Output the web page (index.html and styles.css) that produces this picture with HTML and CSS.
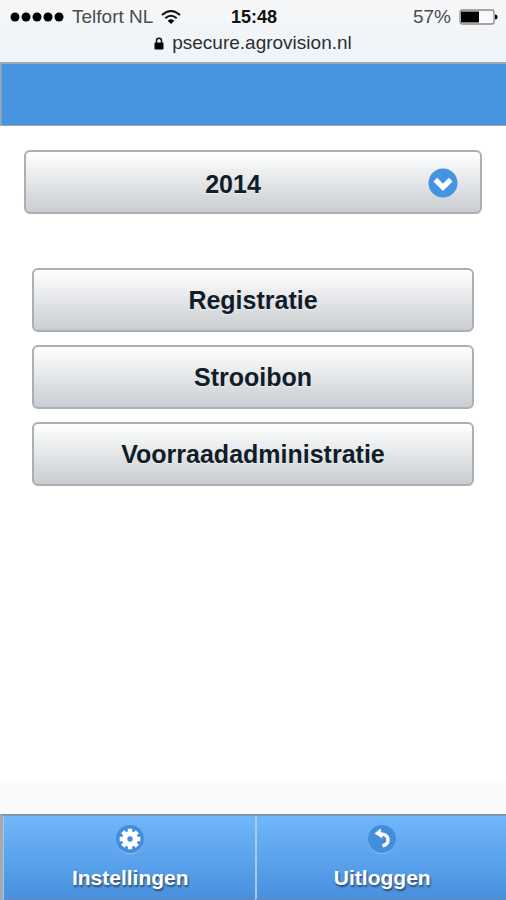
FILE: index.html
```html
<!DOCTYPE html>
<html lang="nl">
<head>
<meta charset="utf-8">
<meta name="viewport" content="width=device-width, initial-scale=1">
<title>Agrovision</title>
<link rel="stylesheet" href="styles.css">
</head>
<body>
<div class="app">
  <div class="browser-bar">
    <div class="status">
      <div class="carrier">
        <svg class="signal" width="54" height="12" viewBox="0 0 54 12" aria-hidden="true"><circle cx="5" cy="6" r="4.5"/><circle cx="16" cy="6" r="4.5"/><circle cx="27" cy="6" r="4.5"/><circle cx="38" cy="6" r="4.5"/><circle cx="49" cy="6" r="4.5"/></svg>
        <span>Telfort NL</span>
        <svg class="wifi" width="20" height="16" viewBox="0 0 20 16" aria-hidden="true"><path d="M1 6Q10-2 19 6M4.300 9.300Q10 4.300 15.700 9.300" fill="none" stroke="#111" stroke-width="2"/><path d="M6.700 11.700Q10 9 13.300 11.700L10 15Z"/></svg>
      </div>
      <span class="clock">15:48</span>
      <div class="power">
        <span>57%</span>
        <svg width="39" height="16" viewBox="0 0 39 16" aria-hidden="true"><rect x="1" y="1" width="34" height="14" rx="2" fill="#fafafa" stroke="#8b8b8b" stroke-width="1.300"/><path d="M2 2.500h18v11H2z"/><path d="M36 5.500q2.500 0 2.500 2.500t-2.500 2.500z"/></svg>
      </div>
    </div>
    <div class="address">
      <svg width="10" height="13" viewBox="0 0 10 13" aria-hidden="true"><path d="M2.500 6V3.700a2.500 2.500 0 0 1 5 0V6" fill="none" stroke="#111" stroke-width="1.500"/><rect x=".5" y="5.500" width="9" height="7" rx="1"/></svg>
      <span>psecure.agrovision.nl</span>
    </div>
  </div>
  <header class="title-bar"></header>
  <main class="content">
    <div class="year">
      <select class="control year-select" aria-label="Jaar"><option>2014</option></select>
      <svg class="year-icon" width="30" height="30" viewBox="0 0 30 30" aria-hidden="true"><circle cx="15" cy="15" r="14.500" fill="#4594e1"/><path d="M7.300 11.700L15 19.300L22.700 11.700" fill="none" stroke="#fff" stroke-width="5.200"/></svg>
    </div>
    <div class="menu">
      <button class="control" type="button">Registratie</button>
      <button class="control" type="button">Strooibon</button>
      <button class="control" type="button">Voorraadadministratie</button>
    </div>
  </main>
  <nav class="tabs">
    <a class="tab" href="#instellingen">
      <svg width="30" height="30" viewBox="0 0 30 30" aria-hidden="true"><circle cx="15" cy="16" r="14" fill="#87bff2"/><circle cx="15" cy="15" r="14" fill="#438edc"/><g stroke="#fff" stroke-width="4.400"><path d="M15 4.700v20.600M4.700 15h20.600M7.700 7.700l14.600 14.600M22.300 7.700L7.700 22.300"/></g><circle cx="15" cy="15" r="7.800" fill="#fff"/><circle cx="15" cy="15" r="2.700" fill="#438edc"/></svg>
      <span>Instellingen</span>
    </a>
    <a class="tab" href="#uitloggen">
      <svg width="30" height="30" viewBox="0 0 30 30" aria-hidden="true"><circle cx="15" cy="16" r="14" fill="#87bff2"/><circle cx="15" cy="15" r="14" fill="#438edc"/><path d="M12 10.500C18 9.500 21 12 21 16C21 19 19 21 15.500 21.800" fill="none" stroke="#fff" stroke-width="3.400"/><path d="M7.500 9.500L13.500 4.500L15.500 14.500Z" fill="#fff"/></svg>
      <span>Uitloggen</span>
    </a>
  </nav>
</div>
</body>
</html>
```
FILE: styles.css
```css
* {
  box-sizing: border-box;
}

body {
  margin: 0;
  font-family: "Liberation Sans", Arial, sans-serif;
  color: #111d29;
}

.app {
  display: flex;
  flex-direction: column;
  min-height: 100vh;
  background: #f9fafc;
}

.browser-bar {
  height: 64px;
  padding-top: 5px;
  background: linear-gradient(#f7f7f8, #edf4fa);
  border-bottom: 2px solid #a2abb5;
  color: #111;
}

.status {
  display: grid;
  grid-template-columns: 1fr auto 1fr;
  align-items: center;
  height: 24px;
  padding: 0 8px 0 10px;
  font-size: 19px;
  line-height: 24px;
}

.carrier,
.power {
  display: flex;
  align-items: center;
  gap: 8px;
  color: #4c4c4e;
  white-space: nowrap;
}

.power {
  justify-content: flex-end;
}

.clock {
  font-size: 18px;
  font-weight: bold;
}

.address {
  display: flex;
  align-items: center;
  justify-content: center;
  gap: 8px;
  height: 28px;
  font-size: 19px;
  color: #2c2e30;
}

.title-bar {
  height: 62px;
  background: #4894e1;
  border-left: 2px solid #8fa5b8;
  border-bottom: 1px solid #9ba4ac;
}

.content {
  flex: 1;
  margin-bottom: 33px;
  padding: 24px;
  background: #fff;
}

.control {
  display: block;
  width: 100%;
  height: 64px;
  border: 2px solid #adb0b3;
  border-radius: 6px;
  background: linear-gradient(#fff, #c9cdd1);
  color: #111d29;
  font-family: inherit;
  font-size: 25px;
  font-weight: bold;
  text-shadow: 0 1px 1px #eee;
}

.year {
  position: relative;
}

.year-select {
  appearance: none;
  padding: 4px 40px 0 0;
  text-align: center;
  text-align-last: center;
}

.year-icon {
  position: absolute;
  top: 18px;
  right: 24px;
  pointer-events: none;
}

.menu {
  display: grid;
  gap: 13px;
  padding: 54px 8px 0;
}

.tabs {
  display: grid;
  grid-template-columns: 1fr 1fr;
  height: 86px;
  border-top: 2px solid #8298a8;
  border-left: 3px solid #a3abb1;
}

.tab {
  display: flex;
  flex-direction: column;
  align-items: center;
  gap: 10px;
  padding: 8px 0 0 2px;
  border-left: 2px solid #a9c9e6;
  border-bottom: 1px solid #6b88ad;
  background: linear-gradient(#70b7fa, #4890de);
  color: #fff;
  font-size: 21px;
  font-weight: bold;
  line-height: 28px;
  text-decoration: none;
  text-shadow: 1px 2px 2px #2b4a6b;
}

.tab:first-child {
  border-left-width: 1px;
}
```
